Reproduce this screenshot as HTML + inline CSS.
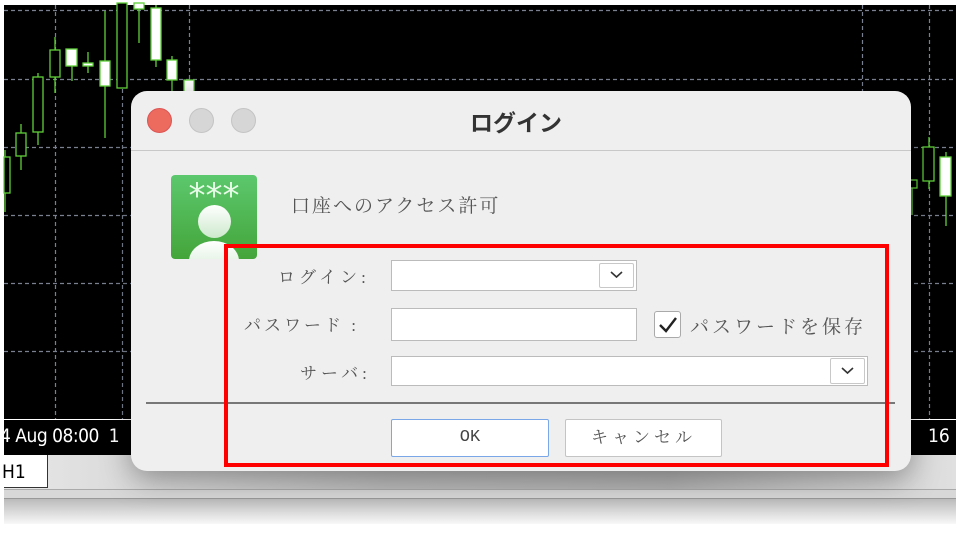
<!DOCTYPE html>
<html><head><meta charset="utf-8"><style>
*{margin:0;padding:0;box-sizing:border-box}
body{width:960px;height:540px;background:#fff;position:relative;overflow:hidden;font-family:"Liberation Sans","Noto Sans CJK JP",sans-serif}
.abs{position:absolute}
.jp{font-family:"Liberation Serif","Noto Serif CJK SC",serif;color:#555}
.inp{position:absolute;background:#fff;border:1px solid #bbb}
.dd{position:absolute;background:#fff;border:1px solid #c8c8c8;border-radius:2px}
</style></head><body>
<div class="abs" style="left:4px;top:5px;width:952px;height:415px;background:#000"></div>
<svg class="abs" style="left:0;top:0" width="960" height="420">
<g stroke="#7a8090" stroke-width="1.2" stroke-dasharray="4,3">
<line x1="4" y1="10.5" x2="956" y2="10.5"/><line x1="4" y1="79.5" x2="956" y2="79.5"/><line x1="4" y1="147.5" x2="956" y2="147.5"/><line x1="4" y1="215.5" x2="956" y2="215.5"/><line x1="4" y1="283.5" x2="956" y2="283.5"/><line x1="4" y1="351.5" x2="956" y2="351.5"/>
<line x1="55.5" y1="5" x2="55.5" y2="419"/><line x1="122.5" y1="5" x2="122.5" y2="419"/><line x1="189.5" y1="5" x2="189.5" y2="419"/><line x1="862.5" y1="5" x2="862.5" y2="419"/><line x1="929.5" y1="5" x2="929.5" y2="419"/>
</g>
<g stroke="#5fcf3a" stroke-width="1.3">
<line x1="5" y1="150" x2="5" y2="212"/><rect x="4" y="157" width="6" height="36" fill="#000"/>
<line x1="21" y1="124" x2="21" y2="170"/><rect x="16" y="133" width="10" height="23" fill="#000"/>
<line x1="38" y1="73" x2="38" y2="145"/><rect x="33" y="77" width="10" height="55" fill="#000"/>
<line x1="55" y1="37" x2="55" y2="93"/><rect x="50" y="50" width="10" height="27" fill="#000"/>
<line x1="72" y1="49" x2="72" y2="81"/><rect x="66" y="49" width="11" height="17" fill="#fff"/>
<line x1="88" y1="52" x2="88" y2="73"/><rect x="83" y="63" width="10" height="3" fill="#fff"/>
<line x1="105" y1="11" x2="105" y2="138"/><rect x="100" y="61" width="10" height="25" fill="#fff"/>
<rect x="117" y="3" width="10" height="85" fill="#000"/>
<line x1="139" y1="5" x2="139" y2="43"/><rect x="134" y="3" width="10" height="6" fill="#fff"/>
<line x1="156" y1="5" x2="156" y2="67"/><rect x="151" y="8" width="10" height="52" fill="#fff"/>
<line x1="172" y1="56" x2="172" y2="95"/><rect x="167" y="60" width="10" height="20" fill="#fff"/>
<rect x="184" y="80" width="10" height="20" fill="#fff"/>
<line x1="929" y1="137" x2="929" y2="189"/><rect x="923" y="147" width="11" height="34" fill="#000"/>
<line x1="946" y1="152" x2="946" y2="226"/><rect x="940" y="157" width="11" height="39" fill="#fff"/>
<rect x="908" y="180" width="9" height="8" fill="#000"/><line x1="912" y1="188" x2="912" y2="215"/>
</g>
<line x1="4" y1="419.5" x2="956" y2="419.5" stroke="#fff"/>
</svg>
<div class="abs" style="left:4px;top:420px;width:952px;height:35px;background:#000"></div>
<div class="abs" style="left:0px;top:425px;color:#fff;font-size:19px;font-family:'DejaVu Sans Condensed','Liberation Sans Narrow',sans-serif;letter-spacing:-0.5px">4 Aug 08:00&nbsp;&nbsp;1</div>
<div class="abs" style="left:928px;top:425px;color:#fff;font-size:19px;font-family:'DejaVu Sans Condensed',sans-serif">16</div>
<div class="abs" style="left:4px;top:455px;width:952px;height:34px;background:linear-gradient(90deg,#e8e8e8,#bdbdbd 40%,#b5b5b5 70%,#e0e0e0)"></div>
<div class="abs" style="left:4px;top:455px;width:44px;height:33px;background:#fff;border-right:1px solid #333;border-bottom:1px solid #333"></div>
<div class="abs" style="left:2px;top:461px;font-size:19px;font-family:'DejaVu Sans Condensed',sans-serif">H1</div>
<div class="abs" style="left:4px;top:489px;width:952px;height:10px;background:#d8d8d8;border-top:1px solid #aaa;border-bottom:1px solid #999"></div>
<div class="abs" style="left:4px;top:499px;width:952px;height:25px;background:linear-gradient(180deg,#bbb,#f8f8f8)"></div>

<div class="abs" style="left:131px;top:91px;width:780px;height:380px;background:#efefef;border-radius:16px;box-shadow:0 8px 30px rgba(0,0,0,.35)"></div>
<div class="abs" style="left:131px;top:150px;width:780px;height:1px;background:#c8c8c8"></div>
<div class="abs" style="left:147px;top:108px;width:25px;height:25px;border-radius:50%;background:#ec6a5e;border:1px solid #d55"></div>
<div class="abs" style="left:189px;top:108px;width:25px;height:25px;border-radius:50%;background:#d6d6d6;border:1px solid #c4c4c4"></div>
<div class="abs" style="left:231px;top:108px;width:25px;height:25px;border-radius:50%;background:#d6d6d6;border:1px solid #c4c4c4"></div>
<div class="abs" style="left:470px;top:104px;font-size:23px;font-weight:bold;color:#333;font-family:'Liberation Sans','Noto Sans CJK JP',sans-serif">ログイン</div>

<div class="abs" style="left:171px;top:175px;width:86px;height:84px;border-radius:4px;background:linear-gradient(#5cc86d,#44a53a);overflow:hidden">
<div class="abs" style="left:0;top:4px;width:86px;text-align:center;color:#e8fbe8;font-size:34px;line-height:34px;letter-spacing:0px;font-family:'DejaVu Sans',sans-serif">***</div>
<div class="abs" style="left:27px;top:30px;width:33px;height:33px;border-radius:50%;background:linear-gradient(#fff,#cde9cd)"></div>
<div class="abs" style="left:18px;top:66px;width:50px;height:40px;border-radius:50%;background:linear-gradient(#fff,#cde9cd)"></div>
</div>
<div class="abs jp" style="left:291px;top:191px;font-size:19px;letter-spacing:2px">口座へのアクセス許可</div>

<div class="abs jp" style="left:278px;top:263px;font-size:17px;letter-spacing:4px">ログイン:</div>
<div class="abs jp" style="left:244px;top:311px;font-size:17px;letter-spacing:3px">パスワード :</div>
<div class="abs jp" style="left:300px;top:359px;font-size:17px;letter-spacing:4px">サーバ:</div>

<div class="inp" style="left:391px;top:260px;width:246px;height:31px"></div>
<div class="dd" style="left:599px;top:263px;width:35px;height:25px"></div>
<svg class="abs" style="left:609px;top:270px" width="15" height="10"><path d="M2 2 L7.5 7 L13 2" fill="none" stroke="#333" stroke-width="1.6"/></svg>
<div class="inp" style="left:391px;top:308px;width:246px;height:33px"></div>
<div class="abs" style="left:654px;top:311px;width:27px;height:27px;background:#fff;border:1px solid #aaa;border-radius:3px"></div>
<svg class="abs" style="left:656px;top:313px" width="24" height="24"><path d="M4 12 L10 18 L20 5" fill="none" stroke="#222" stroke-width="2.4"/></svg>
<div class="abs jp" style="left:690px;top:312px;font-size:19px;letter-spacing:3px">パスワードを保存</div>
<div class="inp" style="left:391px;top:356px;width:477px;height:30px"></div>
<div class="dd" style="left:830px;top:358px;width:35px;height:26px"></div>
<svg class="abs" style="left:840px;top:366px" width="15" height="10"><path d="M2 2 L7.5 7 L13 2" fill="none" stroke="#333" stroke-width="1.6"/></svg>

<div class="abs" style="left:146px;top:402px;width:749px;height:2px;background:#777"></div>
<div class="abs" style="left:391px;top:419px;width:158px;height:38px;background:#fff;border:1px solid #7aa7e8;border-radius:2px;text-align:center;line-height:36px;font-size:17px;color:#444;font-family:'Liberation Mono',monospace">OK</div>
<div class="abs jp" style="left:565px;top:419px;width:157px;height:38px;background:#fff;border:1px solid #c4c4c4;border-radius:2px;text-align:center;line-height:36px;font-size:17px;letter-spacing:4px">キャンセル</div>

<div class="abs" style="left:224px;top:244px;width:665px;height:223px;border:4px solid #f00"></div>
</body></html>
